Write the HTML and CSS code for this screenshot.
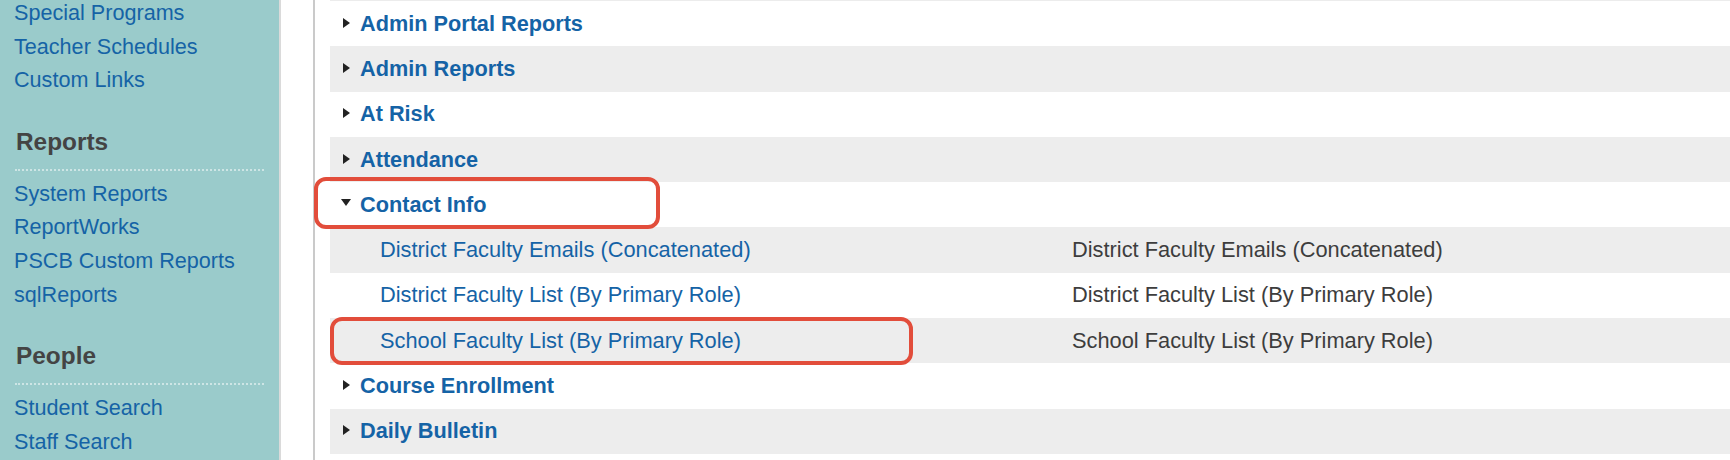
FILE: index.html
```html
<!DOCTYPE html>
<html>
<head>
<meta charset="utf-8">
<link rel="stylesheet" href="styles.css">
</head>
<body>
<div class="page">
  <aside class="sidebar">
    <ul class="links first">
      <li><a href="#">Special Programs</a></li>
      <li><a href="#">Teacher Schedules</a></li>
      <li><a href="#">Custom Links</a></li>
    </ul>
    <h3 class="side-heading">Reports</h3>
    <ul class="links">
      <li><a href="#">System Reports</a></li>
      <li><a href="#">ReportWorks</a></li>
      <li><a href="#">PSCB Custom Reports</a></li>
      <li><a href="#">sqlReports</a></li>
    </ul>
    <h3 class="side-heading">People</h3>
    <ul class="links">
      <li><a href="#">Student Search</a></li>
      <li><a href="#">Staff Search</a></li>
    </ul>
  </aside>
  <main class="content">
    <div class="rows">
      <div class="group"><span class="tri right"></span><a href="#">Admin Portal Reports</a></div>
      <div class="group alt"><span class="tri right"></span><a href="#">Admin Reports</a></div>
      <div class="group"><span class="tri right"></span><a href="#">At Risk</a></div>
      <div class="group alt"><span class="tri right"></span><a href="#">Attendance</a></div>
      <div class="group"><span class="tri down"></span><a href="#">Contact Info</a></div>
      <div class="item alt"><a href="#">District Faculty Emails (Concatenated)</a><span class="desc">District Faculty Emails (Concatenated)</span></div>
      <div class="item"><a href="#">District Faculty List (By Primary Role)</a><span class="desc">District Faculty List (By Primary Role)</span></div>
      <div class="item alt"><a href="#">School Faculty List (By Primary Role)</a><span class="desc">School Faculty List (By Primary Role)</span></div>
      <div class="group"><span class="tri right"></span><a href="#">Course Enrollment</a></div>
      <div class="group alt"><span class="tri right"></span><a href="#">Daily Bulletin</a></div>
    </div>
  </main>
  <div class="highlight box-contact"></div>
  <div class="highlight box-school"></div>
</div>
</body>
</html>
```

FILE: styles.css
```css
html, body {
  margin: 0;
  padding: 0;
  background: #ffffff;
}

body {
  font-family: "Liberation Sans", Arial, sans-serif;
  width: 1730px;
  height: 460px;
  overflow: hidden;
}

a {
  color: #1563a6;
  text-decoration: none;
}

.page {
  position: relative;
  display: flex;
  height: 460px;
  overflow: hidden;
}

/* Sidebar */
.sidebar {
  flex: 0 0 250px;
  width: 250px;
  background: #9acbcb;
  border-right: 2px solid #dadada;
  padding: 0 15px 0 14px;
  height: 460px;
  box-sizing: content-box;
}

.links {
  list-style: none;
  margin: 0;
  padding: 0;
  font-size: 21.6px;
  line-height: 33.7px;
}

.links.first {
  margin-top: -4px;
}

.side-heading {
  margin: 29.5px 0 6px 1px;
  padding: 0 0 12px 1px;
  font-size: 24.4px;
  line-height: 30px;
  font-weight: bold;
  color: #444444;
  border-bottom: 2px dotted rgba(255, 255, 255, 0.5);
}

/* Main content */
.content {
  flex: 1 1 auto;
  margin-left: 32px;
  border-left: 2px solid #cacaca;
  padding-left: 15px;
}

.rows {
  border-top: 1px solid #ececec;
}

.group,
.item {
  height: 45.3px;
  display: flex;
  align-items: center;
  font-size: 21.8px;
  background: #ffffff;
}

.alt {
  background: #ededed;
}

.group {
  padding-left: 10px;
}

.group a {
  font-weight: bold;
  margin-left: 8px;
  font-size: 21.7px;
}

.tri {
  flex: 0 0 12px;
  width: 12px;
  height: 12px;
  display: flex;
  align-items: center;
  justify-content: center;
}

.tri::before {
  content: "";
  display: block;
  width: 0;
  height: 0;
}

.tri.right {
  margin-bottom: 2px;
}

.tri.right::before {
  border-left: 7px solid #222222;
  border-top: 5.5px solid transparent;
  border-bottom: 5.5px solid transparent;
}

.tri.down {
  margin-bottom: 5px;
}

.tri.down::before {
  border-top: 7px solid #222222;
  border-left: 5.5px solid transparent;
  border-right: 5.5px solid transparent;
}

.item {
  display: grid;
  grid-template-columns: 692px 1fr;
  align-items: center;
  padding-left: 50px;
}

.item .desc {
  color: #3d3d3d;
}

/* Annotation highlights */
.highlight {
  position: absolute;
  border: 4px solid #e24d3b;
  border-radius: 12px;
  box-sizing: border-box;
  pointer-events: none;
}

.box-contact {
  left: 314px;
  top: 177px;
  width: 346px;
  height: 52px;
}

.box-school {
  left: 330px;
  top: 317px;
  width: 583px;
  height: 48px;
}
```
